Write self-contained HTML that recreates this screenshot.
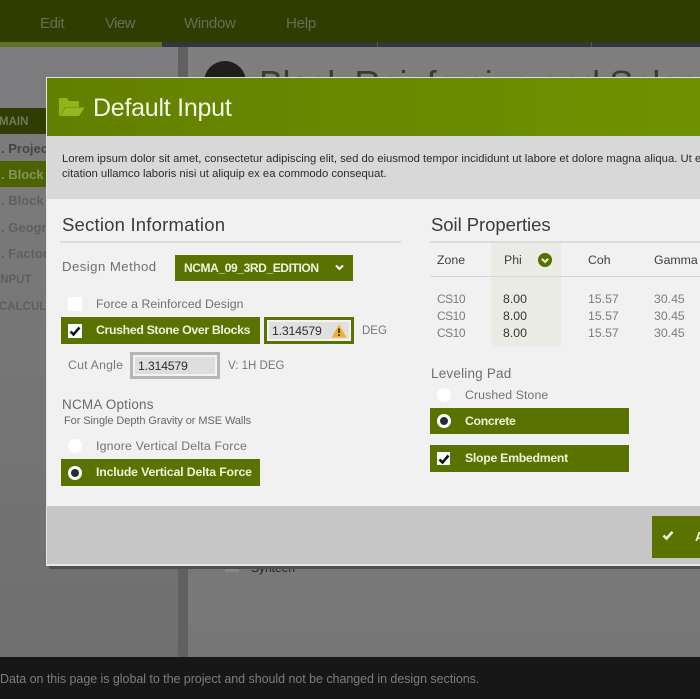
<!DOCTYPE html>
<html><head><meta charset="utf-8">
<style>
html,body{margin:0;padding:0}
body{width:700px;height:699px;overflow:hidden;position:relative;background:#777;font-family:"Liberation Sans","DejaVu Sans",sans-serif}
div{position:absolute}
.t{white-space:nowrap;line-height:1;position:absolute}
.g{background:#5a7300}
.box{width:14px;height:14px;background:#fff}
.b{font-size:12.3px;font-weight:bold;color:#eef2dc}
.h{font-size:12.3px;color:#3e3e3e}
.c{font-size:12px;color:#7d7d7d;letter-spacing:-.5px}
.n{font-size:12.3px;color:#7d7d7d}
.d{font-size:12.3px;color:#333}
.s{font-size:13px;font-weight:bold;color:#5f5f5f}
svg{position:absolute;overflow:visible}
</style></head><body>
<div style="left:0;top:0;width:700px;height:42px;background:#2f3d00"></div>
<div style="left:0;top:42px;width:700px;height:5px;background:#33363a"></div>
<div style="left:0;top:42px;width:162px;height:5px;background:#5f7220"></div>
<div style="left:377px;top:42px;width:1px;height:5px;background:#555"></div>
<div style="left:591px;top:42px;width:1px;height:5px;background:#555"></div>
<span class="t" style="left:40px;top:15.5px;font-size:15px;color:#666e55;letter-spacing:-.4px">Edit</span>
<span class="t" style="left:105px;top:15.5px;font-size:15px;color:#666e55;letter-spacing:-.6px">View</span>
<span class="t" style="left:184px;top:15.5px;font-size:15px;color:#666e55;letter-spacing:-.3px">Window</span>
<span class="t" style="left:286px;top:15.5px;font-size:15px;color:#666e55;letter-spacing:-.2px">Help</span>

<div style="left:0;top:47px;width:178px;height:610px;background:linear-gradient(#7d7d7f,#6f6f6f)"></div>
<div style="left:178px;top:47px;width:10px;height:610px;background:#606060"></div>
<div style="left:188px;top:47px;width:512px;height:610px;background:linear-gradient(#7e7e7e,#777)"></div>
<div style="left:204px;top:61px;width:42px;height:42px;border-radius:50%;background:#1e1e1e"></div>
<span class="t" style="left:259px;top:66px;font-size:36px;color:#3a3a3a;letter-spacing:-.45px">Block Reinforcing and Select</span>

<div style="left:0;top:108px;width:46px;height:26px;background:#2f3d00"></div>
<span class="t" style="left:-1px;top:117px;font-size:11.5px;font-weight:bold;color:#70795a">MAIN</span>
<span class="t s" style="left:1px;top:142px;color:#454545">. Project</span>
<div style="left:0;top:161px;width:46px;height:26px;background:#4d6200"></div>
<span class="t s" style="left:1px;top:167.5px;color:#84925c">. Block R</span>
<span class="t s" style="left:1px;top:194px">. Block R</span>
<span class="t s" style="left:1px;top:221px">. Geogr</span>
<span class="t s" style="left:1px;top:247px">. Factors</span>
<span class="t" style="left:-3px;top:275px;font-size:11.5px;font-weight:bold;color:#5f5f5f">INPUT</span>
<span class="t" style="left:-1px;top:302px;font-size:11.5px;font-weight:bold;color:#5f5f5f">CALCULA</span>

<div style="left:225px;top:563px;width:14px;height:9px;background:#888"></div>
<span class="t" style="left:251px;top:562px;font-size:12px;color:#222">Synteen</span>

<div style="left:0;top:657px;width:700px;height:42px;background:#171717"></div>
<span class="t" style="left:0;top:672.5px;font-size:12.5px;color:#7d7d7d;letter-spacing:-.05px">Data on this page is global to the project and should not be changed in design sections.</span>

<div style="left:49px;top:80px;width:651px;height:489px;background:#4f4f4f"></div>
<div style="left:46px;top:77px;width:654px;height:489px;background:#f1f1f1;border-top:1px solid #dfe2d6;border-left:1px solid #e4e4e4;border-bottom:2px solid #e6e6e6;box-sizing:border-box"></div>
<div style="left:47px;top:78px;width:653px;height:58px;background:linear-gradient(90deg,#628000,#6f9200)"></div>
<svg style="left:59px;top:97px" width="26" height="20" viewBox="0 0 26 20"><path d="M0 2q0-1 1-1h7l2 3h9q1 0 1 1v5H6L1 19H0z" fill="#8fb51a"/><path d="M6.500 10.500H25.500L20 19H1.500z" fill="#93b91e"/></svg>
<span class="t" style="left:93px;top:95.5px;font-size:25px;color:#f2f6e4;letter-spacing:-.25px">Default Input</span>
<div style="left:47px;top:136px;width:653px;height:63px;background:#d8d8d8"></div>
<span class="t" style="left:62px;top:153.5px;font-size:11.3px;color:#2b2b2b">Lorem ipsum dolor sit amet, consectetur adipiscing elit, sed do eiusmod tempor incididunt ut labore et dolore magna aliqua. Ut en</span>
<span class="t" style="left:62px;top:168.5px;font-size:11.3px;color:#2b2b2b">citation ullamco laboris nisi ut aliquip ex ea commodo consequat.</span>

<span class="t" style="left:62px;top:216px;font-size:18.5px;color:#3b3b3b;letter-spacing:.2px">Section Information</span>
<div style="left:60px;top:241px;width:341px;height:2px;background:#dcdcdc"></div>
<span class="t" style="left:62px;top:260px;font-size:13.2px;color:#6f6f6f;letter-spacing:.45px">Design Method</span>
<div class="g" style="left:175px;top:255px;width:178px;height:26px"></div>
<span class="t" style="left:184px;top:262px;font-size:12px;color:#f0f3e2;font-weight:bold;letter-spacing:-.39px">NCMA_09_3RD_EDITION</span>
<svg style="left:335px;top:264px" width="9" height="7" viewBox="0 0 9 7"><path d="M1 1.500L4.500 5 8 1.500" fill="none" stroke="#fff" stroke-width="2"/></svg>

<div class="box" style="left:68px;top:297px"></div>
<span class="t" style="left:96px;top:298px;font-size:12.3px;color:#6f6f6f;letter-spacing:.05px">Force a Reinforced Design</span>
<div class="g" style="left:61px;top:317px;width:199px;height:27px"></div>
<div class="box" style="left:68px;top:324px"></div>
<svg style="left:68px;top:324px" width="14" height="14" viewBox="0 0 14 14"><path d="M2.500 7.500L5.500 10.500 11.500 3.500" fill="none" stroke="#111" stroke-width="2.600"/></svg>
<span class="t b" style="left:96px;top:324px;letter-spacing:-.34px">Crushed Stone Over Blocks</span>
<div style="left:264px;top:317px;width:90px;height:27px;background:#5a7300"></div>
<div style="left:267px;top:320px;width:84px;height:21px;background:#f3f3f3"></div>
<div style="left:269px;top:322px;width:80px;height:17px;background:#e0e0e0"></div>
<span class="t" style="left:272px;top:325px;font-size:12.3px;color:#2d2d2d;letter-spacing:-.2px">1.314579</span>
<svg style="left:331px;top:324px" width="16" height="14" viewBox="0 0 16 14"><path d="M8 .5L15.500 13.500H.5z" fill="#efb22f"/><path d="M8 4.500V9M8 10.200V12" stroke="#3d2d05" stroke-width="1.800"/></svg>
<span class="t" style="left:362px;top:326px;font-size:11.5px;color:#777">DEG</span>

<span class="t" style="left:68px;top:358.5px;font-size:12.3px;color:#777;letter-spacing:.2px">Cut Angle</span>
<div style="left:130px;top:352px;width:90px;height:27px;background:#b6b6b6"></div>
<div style="left:133px;top:355px;width:84px;height:21px;background:#f3f3f3"></div>
<div style="left:135px;top:357px;width:80px;height:17px;background:#dedede"></div>
<span class="t" style="left:138px;top:360px;font-size:12.3px;color:#2d2d2d;letter-spacing:-.2px">1.314579</span>
<span class="t" style="left:228px;top:361px;font-size:11.5px;color:#777">V: 1H DEG</span>

<span class="t" style="left:62px;top:398px;font-size:13.5px;color:#6a6a6a;letter-spacing:.2px">NCMA Options</span>
<span class="t" style="left:64px;top:416px;font-size:11px;color:#666;letter-spacing:-.07px">For Single Depth Gravity or MSE Walls</span>
<div class="box" style="left:68px;top:439px;border-radius:50%"></div>
<span class="t" style="left:96px;top:440px;font-size:12.3px;color:#737373;letter-spacing:.2px">Ignore Vertical Delta Force</span>
<div class="g" style="left:61px;top:459px;width:199px;height:27px"></div>
<div class="box" style="left:68px;top:466px;border-radius:50%"></div>
<div style="left:71px;top:469px;width:8px;height:8px;border-radius:50%;background:#2a2c34"></div>
<span class="t b" style="left:96px;top:466px;letter-spacing:-.17px">Include Vertical Delta Force</span>

<span class="t" style="left:431px;top:216px;font-size:18.5px;color:#3b3b3b;letter-spacing:-.05px">Soil Properties</span>
<div style="left:491px;top:243px;width:70px;height:104px;background:#ebebe6"></div>
<div style="left:430px;top:241px;width:270px;height:2px;background:#dcdcdc"></div>
<div style="left:430px;top:276px;width:270px;height:1px;background:#d6d6d6"></div>
<span class="t h" style="left:437px;top:254px">Zone</span>
<span class="t h" style="left:504px;top:254px">Phi</span>
<div style="left:538px;top:253px;width:14px;height:14px;border-radius:50%;background:#557000"></div>
<svg style="left:538px;top:253px" width="14" height="14" viewBox="0 0 14 14"><path d="M3.800 5.800L7 9 10.200 5.800" fill="none" stroke="#f2f5e4" stroke-width="2"/></svg>
<span class="t h" style="left:588px;top:254px">Coh</span>
<span class="t h" style="left:654px;top:254px">Gamma</span>

<span class="t c" style="left:437px;top:293px">CS10</span>
<span class="t c" style="left:437px;top:310px">CS10</span>
<span class="t c" style="left:437px;top:327px">CS10</span>
<span class="t d" style="left:503px;top:293px">8.00</span>
<span class="t d" style="left:503px;top:310px">8.00</span>
<span class="t d" style="left:503px;top:327px">8.00</span>
<span class="t n" style="left:588px;top:293px">15.57</span>
<span class="t n" style="left:588px;top:310px">15.57</span>
<span class="t n" style="left:588px;top:327px">15.57</span>
<span class="t n" style="left:654px;top:293px">30.45</span>
<span class="t n" style="left:654px;top:310px">30.45</span>
<span class="t n" style="left:654px;top:327px">30.45</span>

<span class="t" style="left:431px;top:367px;font-size:13.5px;color:#6f6f6f;letter-spacing:.2px">Leveling Pad</span>
<div class="box" style="left:437px;top:388px;border-radius:50%"></div>
<span class="t" style="left:465px;top:389px;font-size:12.3px;color:#737373;letter-spacing:.1px">Crushed Stone</span>
<div class="g" style="left:430px;top:408px;width:199px;height:26px"></div>
<div class="box" style="left:437px;top:414px;border-radius:50%"></div>
<div style="left:440px;top:417px;width:8px;height:8px;border-radius:50%;background:#2a2c34"></div>
<span class="t b" style="left:465px;top:415px;letter-spacing:-.35px">Concrete</span>
<div class="g" style="left:430px;top:445px;width:199px;height:27px"></div>
<div class="box" style="left:437px;top:452px;width:13px;height:13px"></div>
<svg style="left:437px;top:452px" width="14" height="14" viewBox="0 0 14 14"><path d="M2.500 7.500L5.500 10.500 11.500 3.500" fill="none" stroke="#111" stroke-width="2.600"/></svg>
<span class="t b" style="left:465px;top:452px;letter-spacing:-.29px">Slope Embedment</span>

<div style="left:47px;top:506px;width:653px;height:58px;background:#c6c6c6"></div>
<div class="g" style="left:652px;top:516px;width:48px;height:42px"></div>
<svg style="left:662px;top:530px" width="12" height="11" viewBox="0 0 12 11"><path d="M1.500 5.500L4.500 8.500 10.500 1.800" fill="none" stroke="#f2f5e4" stroke-width="2.500"/></svg>
<span class="t" style="left:695px;top:530px;font-size:13px;font-weight:bold;color:#eef2dc">A</span>
</body></html>
